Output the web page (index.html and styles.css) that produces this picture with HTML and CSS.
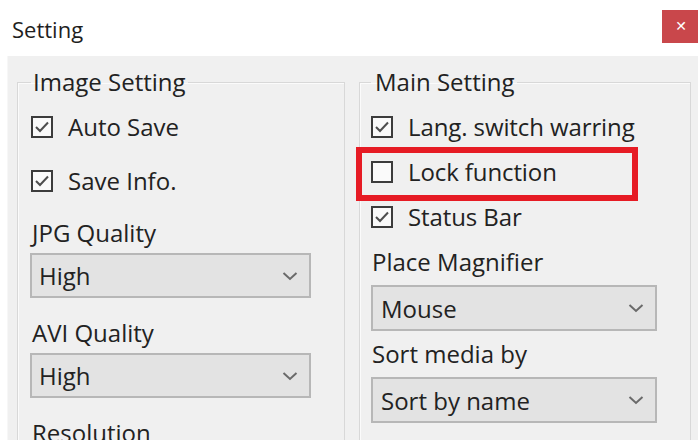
FILE: index.html
```html
<!DOCTYPE html>
<html lang="en">
<head>
<meta charset="utf-8">
<title>Setting</title>
<link rel="stylesheet" href="styles.css">
</head>
<body>
<div class="window">
  <header class="titlebar">
    <span class="title">Setting</span>
    <button class="close" type="button" aria-label="Close">&#x2715;</button>
  </header>
  <main class="panel">
    <fieldset class="group group-image">
      <legend>Image Setting</legend>
      <label class="check"><span class="box"><svg viewBox="0 0 18 18"><path d="M3 9 L7 13 L15 4.5"/></svg></span>Auto Save</label>
      <label class="check check-second"><span class="box"><svg viewBox="0 0 18 18"><path d="M3 9 L7 13 L15 4.5"/></svg></span>Save Info.</label>
      <div class="field field-first">
        <span class="caption">JPG Quality</span>
        <div class="select"><span>High</span><svg class="chev" viewBox="0 0 16 10"><path d="M1.5 2 L8 8 L14.5 2"/></svg></div>
      </div>
      <div class="field">
        <span class="caption">AVI Quality</span>
        <div class="select"><span>High</span><svg class="chev" viewBox="0 0 16 10"><path d="M1.5 2 L8 8 L14.5 2"/></svg></div>
      </div>
      <div class="field">
        <span class="caption">Resolution</span>
      </div>
    </fieldset>

    <fieldset class="group group-main">
      <legend>Main Setting</legend>
      <label class="check"><span class="box"><svg viewBox="0 0 18 18"><path d="M3 9 L7 13 L15 4.5"/></svg></span>Lang. switch warring</label>
      <label class="check marked"><span class="box"></span>Lock function</label>
      <label class="check"><span class="box"><svg viewBox="0 0 18 18"><path d="M3 9 L7 13 L15 4.5"/></svg></span>Status Bar</label>
      <div class="field field-first">
        <span class="caption">Place Magnifier</span>
        <div class="select"><span>Mouse</span><svg class="chev" viewBox="0 0 16 10"><path d="M1.5 2 L8 8 L14.5 2"/></svg></div>
      </div>
      <div class="field">
        <span class="caption">Sort media by</span>
        <div class="select"><span>Sort by name</span><svg class="chev" viewBox="0 0 16 10"><path d="M1.5 2 L8 8 L14.5 2"/></svg></div>
      </div>
    </fieldset>
  </main>
</div>
</body>
</html>
```

FILE: styles.css
```css
html, body {
  margin: 0;
  padding: 0;
  background: #ffffff;
  overflow: hidden;
}

body {
  font-family: "Open Sans", "Noto Sans", sans-serif;
  color: #222222;
}

.window {
  width: 698px;
  height: 440px;
  display: flex;
  flex-direction: column;
  background: #ffffff;
}

/* title bar */
.titlebar {
  height: 56px;
  flex: none;
  display: flex;
  justify-content: space-between;
  align-items: flex-start;
  box-sizing: border-box;
  padding-left: 12px;
}

.title {
  font-size: 22px;
  line-height: 30px;
  margin-top: 14px;
  color: #1e1e1e;
}

.close {
  width: 36px;
  height: 33px;
  margin-top: 10px;
  border: none;
  padding: 0 0 0 2px;
  background: #c9474b;
  color: #ffffff;
  font-family: "DejaVu Sans", sans-serif;
  font-size: 14px;
  font-weight: bold;
  line-height: 33px;
  text-align: center;
}

/* client area */
.panel {
  flex: 1;
  margin-left: 7px;
  background: #f0f0f0;
  display: flex;
  align-items: flex-start;
  gap: 14px;
  padding: 12px 0 0 9px;
  border-left: 1px solid #f7f7f7;
  box-sizing: border-box;
}

.group {
  margin: 0;
  border: 1px solid #d8d8d8;
  box-shadow: inset 1px 1px 0 #fbfbfb;
  padding: 16px 13px 40px 13px;
  display: flex;
  flex-direction: column;
  box-sizing: border-box;
  min-width: 0;
}

.group-image {
  width: 328px;
}

.group-main {
  width: 332px;
  padding-left: 11px;
}

.group legend {
  font-size: 24px;
  line-height: 28px;
  padding: 0 2px;
  color: #222222;
}

.group-main legend {
  padding-left: 4px;
}

/* checkboxes */
.check {
  position: relative;
  display: flex;
  align-items: center;
  height: 30px;
  font-size: 24px;
  line-height: 30px;
  gap: 15px;
  white-space: nowrap;
}

.group-main .check {
  gap: 15px;
  letter-spacing: -0.1px;
}

.group-main .check + .check {
  margin-top: 15px;
}

.check-second {
  margin-top: 24px;
}

.box {
  width: 22px;
  height: 22px;
  flex: none;
  box-sizing: border-box;
  border: 2px solid #3c3c3c;
  background: #fafafa;
  display: flex;
}

.box svg {
  width: 18px;
  height: 18px;
}

.box path {
  fill: none;
  stroke: #4e4e4e;
  stroke-width: 2;
}

/* red highlight frame around the lock option */
.marked::after {
  content: "";
  position: absolute;
  left: -15px;
  top: -10px;
  width: 282px;
  height: 54px;
  box-sizing: border-box;
  border: 6px solid #e61b24;
}

/* label + dropdown pairs */
.field {
  display: flex;
  flex-direction: column;
  gap: 5px;
  margin-top: 20px;
}

.field-first {
  margin-top: 22px;
}

.group-main .field {
  gap: 8px;
  margin-top: 8px;
}

.group-main .field-first {
  margin-top: 15px;
}

.caption {
  font-size: 24px;
  line-height: 30px;
  padding-left: 1px;
  white-space: nowrap;
}

.select {
  width: 281px;
  height: 45px;
  box-sizing: border-box;
  border: 2px solid #b7b7b7;
  background: #e3e3e3;
  display: flex;
  align-items: center;
  justify-content: space-between;
  padding: 0 11px 0 7px;
  margin-left: -1px;
  font-size: 24px;
}

.group-main .select {
  width: 286px;
  height: 46px;
  margin-left: 0;
  padding-left: 8px;
}

.chev {
  width: 16px;
  height: 10px;
}

.chev path {
  fill: none;
  stroke: #6a6a6a;
  stroke-width: 2;
}
```
